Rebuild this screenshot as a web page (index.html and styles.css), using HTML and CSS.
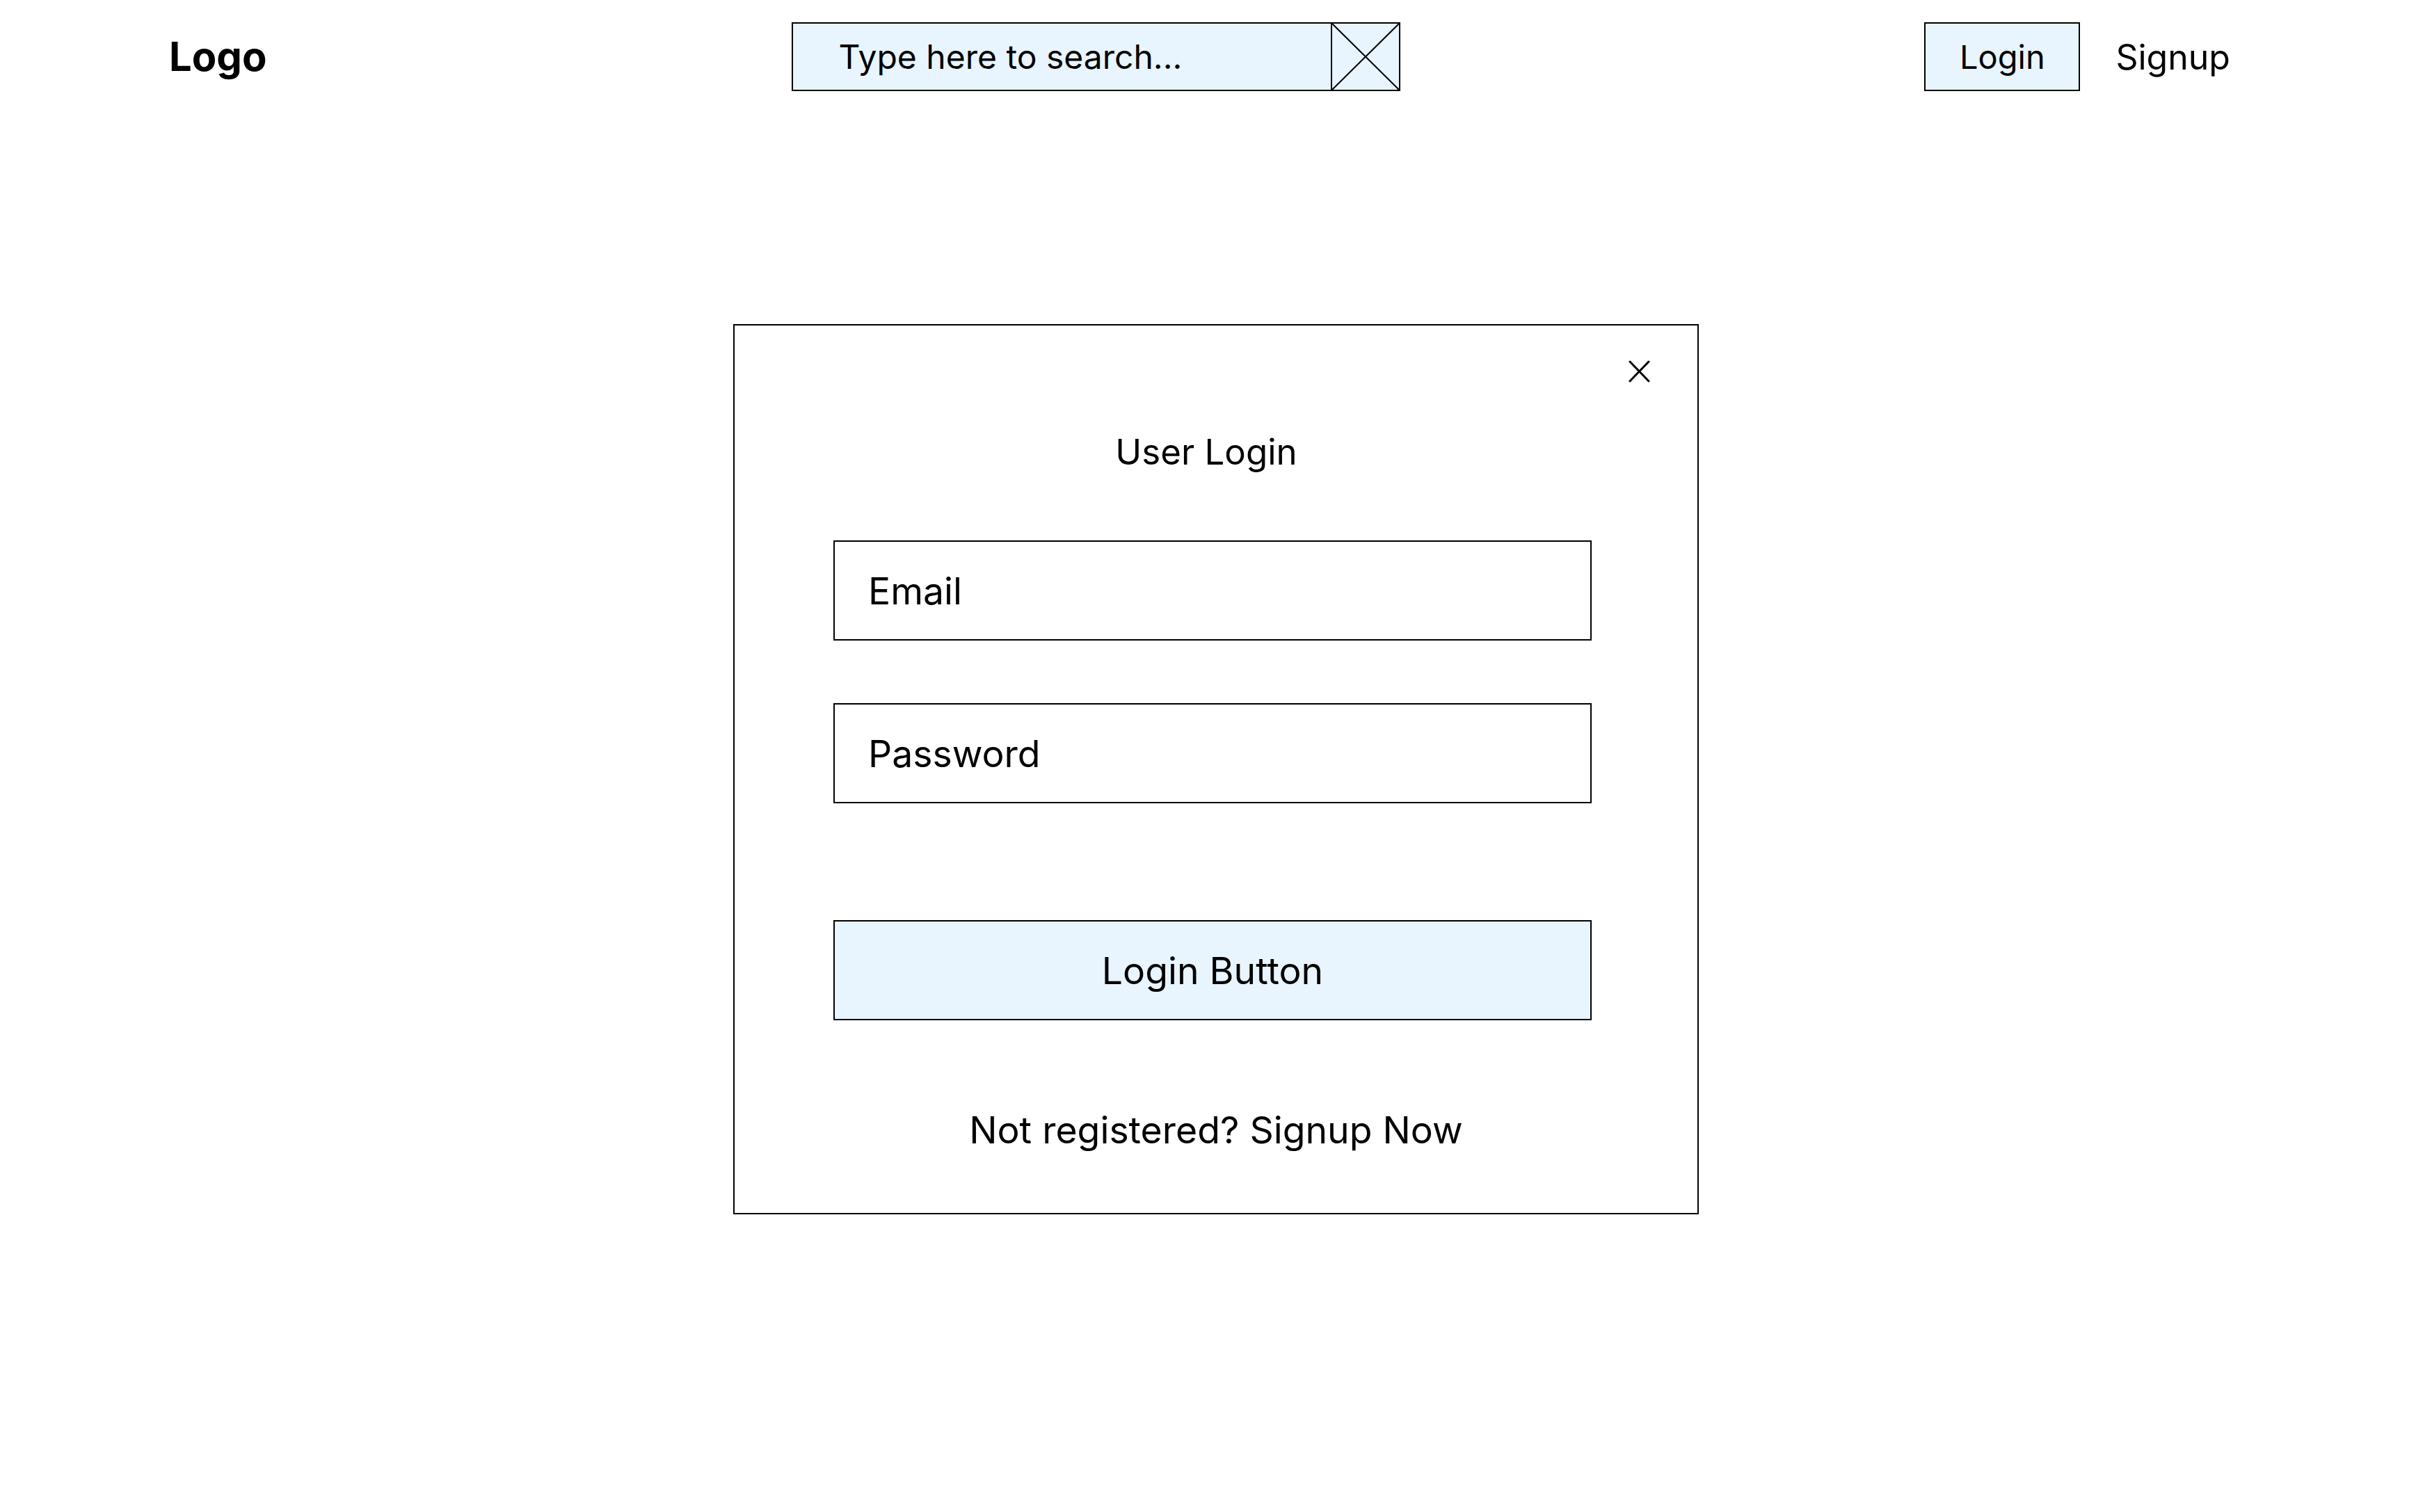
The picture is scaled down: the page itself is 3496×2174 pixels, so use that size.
FILE: index.html
```html
<!DOCTYPE html>
<html lang="en">
<head>
<meta charset="utf-8">
<title>User Login</title>
<link rel="stylesheet" href="styles.css">
</head>
<body>
<header class="topbar">
  <div class="logo">Logo</div>
  <div class="search">
    <span class="search-text">Type here to search...</span>
    <span class="search-x">
      <svg viewBox="0 0 100 100" preserveAspectRatio="none" width="100%" height="100%">
        <line x1="0" y1="0" x2="100" y2="100" stroke="#000" stroke-width="2" vector-effect="non-scaling-stroke"/>
        <line x1="100" y1="0" x2="0" y2="100" stroke="#000" stroke-width="2" vector-effect="non-scaling-stroke"/>
      </svg>
    </span>
  </div>
  <nav class="auth">
    <span class="nav-login">Login</span>
    <span class="nav-signup">Signup</span>
  </nav>
</header>

<main class="modal">
  <span class="close">
    <svg viewBox="0 0 31 32" width="31" height="32">
      <line x1="2" y1="2" x2="29" y2="30" stroke="#000" stroke-width="3" stroke-linecap="round"/>
      <line x1="29" y1="2" x2="2" y2="30" stroke="#000" stroke-width="3" stroke-linecap="round"/>
    </svg>
  </span>
  <h1 class="title">User Login</h1>
  <div class="field field-email">Email</div>
  <div class="field field-password">Password</div>
  <div class="btn">Login Button</div>
  <p class="register">Not registered? Signup Now</p>
</main>
</body>
</html>
```
FILE: styles.css
```css
* { box-sizing: border-box; }

body {
  margin: 0;
  background: #ffffff;
  color: #000000;
  font-family: "Inter", "Noto Sans", sans-serif;
}

.topbar {
  display: flex;
  justify-content: space-between;
  align-items: center;
  padding: 32px 290px 0 243px;
}

.logo {
  font-weight: 700;
  font-size: 58px;
  line-height: 99px;
}

.search {
  display: flex;
  width: 875px;
  height: 99px;
  border: 2px solid #000;
  background: #e8f4fe;
}

.search-text {
  flex: 1;
  display: flex;
  align-items: center;
  padding-left: 66px;
  font-size: 48px;
}

.search-x {
  display: block;
  width: 98px;
  height: 100%;
  border-left: 2px solid #000;
}

.search-x svg { display: block; }

.auth {
  display: flex;
  align-items: center;
  gap: 51px;
}

.nav-login {
  display: flex;
  align-items: center;
  justify-content: center;
  width: 224px;
  height: 99px;
  border: 2px solid #000;
  background: #e8f4fe;
  font-size: 47px;
}

.nav-signup {
  font-size: 50px;
}

.modal {
  position: relative;
  width: 1388px;
  height: 1280px;
  margin: 335px auto 0;
  border: 2px solid #000;
  padding: 146px 152px 0 142px;
}

.close {
  position: absolute;
  top: 50px;
  right: 68px;
  width: 31px;
  height: 32px;
}

.close svg { display: block; }

.title {
  margin: 0;
  height: 72px;
  line-height: 72px;
  font-size: 51px;
  font-weight: 400;
  text-align: center;
  padding-right: 18px;
}

.field {
  display: flex;
  align-items: center;
  height: 144px;
  border: 2px solid #000;
  padding-left: 48px;
  font-size: 53.5px;
  background: #ffffff;
}

.field-email { margin-top: 91px; }
.field-password { margin-top: 90px; }

.btn {
  display: flex;
  align-items: center;
  justify-content: center;
  height: 144px;
  margin-top: 168px;
  border: 2px solid #000;
  background: #e8f4fe;
  font-size: 53.5px;
}

.register {
  margin: 122px 0 0;
  height: 72px;
  line-height: 72px;
  font-size: 53.5px;
  text-align: center;
  padding-left: 10px;
}
```
